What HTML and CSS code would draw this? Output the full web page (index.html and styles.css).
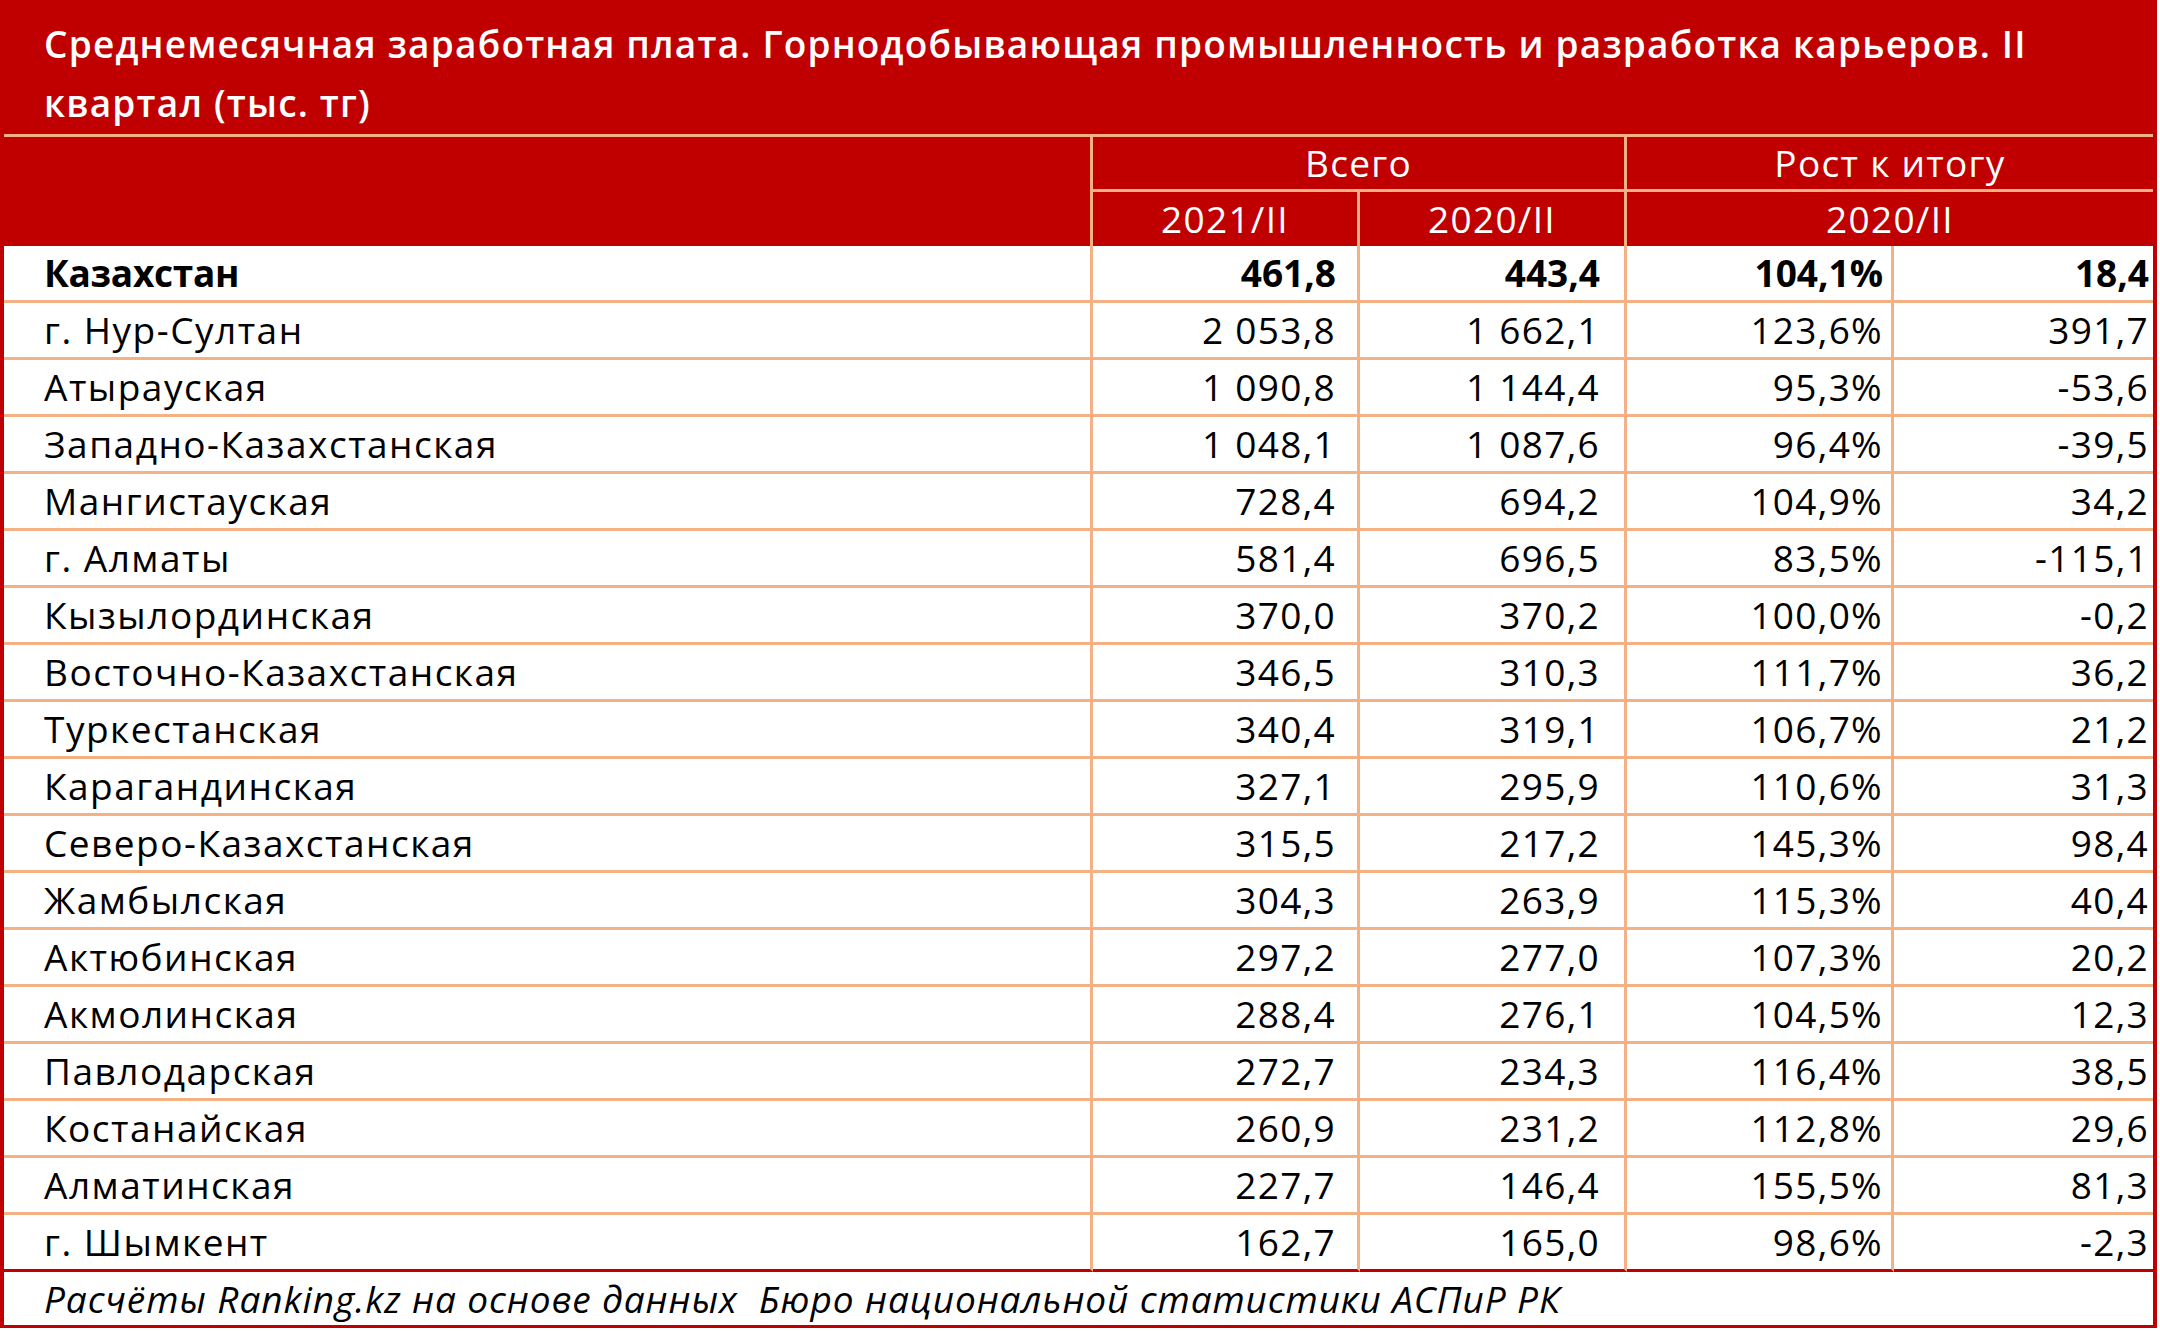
FILE: index.html
```html
<!DOCTYPE html>
<html lang="ru">
<head>
<meta charset="utf-8">
<title>Среднемесячная заработная плата</title>
<link rel="stylesheet" href="styles.css">
</head>
<body>
<div class="sheet">
  <div class="title">Среднемесячная заработная плата. Горнодобывающая промышленность и разработка карьеров. II<br>квартал (тыс. тг)</div>
  <table class="grid">
    <colgroup>
      <col class="c-name">
      <col class="c-num">
      <col class="c-num">
      <col class="c-num">
      <col class="c-last">
    </colgroup>
    <thead>
      <tr class="h1">
        <th rowspan="2" class="blank"></th>
        <th colspan="2">Всего</th>
        <th colspan="2" class="end">Рост к итогу</th>
      </tr>
      <tr class="h2">
        <th>2021/II</th>
        <th>2020/II</th>
        <th colspan="2" class="end">2020/II</th>
      </tr>
    </thead>
    <tbody>
      <tr class="total"><td class="name">Казахстан</td><td class="n2">461,8</td><td class="n3">443,4</td><td class="n4">104,1%</td><td class="n5">18,4</td></tr>
      <tr><td class="name">г. Нур-Султан</td><td class="n2">2 053,8</td><td class="n3">1 662,1</td><td class="n4">123,6%</td><td class="n5">391,7</td></tr>
      <tr><td class="name">Атырауская</td><td class="n2">1 090,8</td><td class="n3">1 144,4</td><td class="n4">95,3%</td><td class="n5">-53,6</td></tr>
      <tr><td class="name">Западно-Казахстанская</td><td class="n2">1 048,1</td><td class="n3">1 087,6</td><td class="n4">96,4%</td><td class="n5">-39,5</td></tr>
      <tr><td class="name">Мангистауская</td><td class="n2">728,4</td><td class="n3">694,2</td><td class="n4">104,9%</td><td class="n5">34,2</td></tr>
      <tr><td class="name">г. Алматы</td><td class="n2">581,4</td><td class="n3">696,5</td><td class="n4">83,5%</td><td class="n5">-115,1</td></tr>
      <tr><td class="name">Кызылординская</td><td class="n2">370,0</td><td class="n3">370,2</td><td class="n4">100,0%</td><td class="n5">-0,2</td></tr>
      <tr><td class="name">Восточно-Казахстанская</td><td class="n2">346,5</td><td class="n3">310,3</td><td class="n4">111,7%</td><td class="n5">36,2</td></tr>
      <tr><td class="name">Туркестанская</td><td class="n2">340,4</td><td class="n3">319,1</td><td class="n4">106,7%</td><td class="n5">21,2</td></tr>
      <tr><td class="name">Карагандинская</td><td class="n2">327,1</td><td class="n3">295,9</td><td class="n4">110,6%</td><td class="n5">31,3</td></tr>
      <tr><td class="name">Северо-Казахстанская</td><td class="n2">315,5</td><td class="n3">217,2</td><td class="n4">145,3%</td><td class="n5">98,4</td></tr>
      <tr><td class="name">Жамбылская</td><td class="n2">304,3</td><td class="n3">263,9</td><td class="n4">115,3%</td><td class="n5">40,4</td></tr>
      <tr><td class="name">Актюбинская</td><td class="n2">297,2</td><td class="n3">277,0</td><td class="n4">107,3%</td><td class="n5">20,2</td></tr>
      <tr><td class="name">Акмолинская</td><td class="n2">288,4</td><td class="n3">276,1</td><td class="n4">104,5%</td><td class="n5">12,3</td></tr>
      <tr><td class="name">Павлодарская</td><td class="n2">272,7</td><td class="n3">234,3</td><td class="n4">116,4%</td><td class="n5">38,5</td></tr>
      <tr><td class="name">Костанайская</td><td class="n2">260,9</td><td class="n3">231,2</td><td class="n4">112,8%</td><td class="n5">29,6</td></tr>
      <tr><td class="name">Алматинская</td><td class="n2">227,7</td><td class="n3">146,4</td><td class="n4">155,5%</td><td class="n5">81,3</td></tr>
      <tr><td class="name">г. Шымкент</td><td class="n2">162,7</td><td class="n3">165,0</td><td class="n4">98,6%</td><td class="n5">-2,3</td></tr>
    </tbody>
    <tfoot>
      <tr><td colspan="5" class="source">Расчёты Ranking.kz на основе данных&nbsp; Бюро национальной статистики АСПиР РК</td></tr>
    </tfoot>
  </table>
</div>
</body>
</html>
```

FILE: styles.css
```css
html, body {
  margin: 0;
  padding: 0;
  background: #ffffff;
}

body {
  font-family: "Open Sans", "Noto Sans", "DejaVu Sans", sans-serif;
  font-size: 37px;
  letter-spacing: 1.3px;
  color: #000000;
}

.sheet {
  width: 2149px;
  border-left: 4px solid #c00000;
  border-right: 4px solid #c00000;
  background: #ffffff;
}

.title {
  background: #c00000;
  color: #ffffff;
  font-weight: 600;
  letter-spacing: 1.2px;
  line-height: 59px;
  padding: 14px 0 0 40px;
  height: 120px;
  border-bottom: 3px solid #f4b183;
  white-space: nowrap;
}

.grid {
  width: 2149px;
  table-layout: fixed;
  border-collapse: separate;
  border-spacing: 0;
}

.c-name { width: 1089px; }
.c-num { width: 267px; }
.c-last { width: 259px; }

.grid th, .grid td {
  padding: 0;
  box-sizing: border-box;
  white-space: nowrap;
  overflow: hidden;
}

.grid thead th {
  background: #c00000;
  color: #ffffff;
  font-weight: 400;
  text-align: center;
  border-right: 3px solid #f4b183;
}

.grid thead th.end {
  border-right: 0;
}

.grid thead .h1 th {
  line-height: 52px;
  border-bottom: 3px solid #f4b183;
}

.grid thead .h1 th.blank {
  border-bottom: 0;
}

.grid thead .h2 th {
  line-height: 54px;
}

.grid tbody td {
  line-height: 54px;
  border-bottom: 3px solid #f4b183;
  border-right: 3px solid #f4b183;
  text-align: right;
}

.grid tbody tr:last-child td {
  border-bottom-color: #c00000;
}

.grid tbody td.name {
  text-align: left;
  padding-left: 40px;
  letter-spacing: 1.5px;
}

.grid tbody td.n2 { padding-right: 21px; }
.grid tbody td.n3 { padding-right: 24px; }
.grid tbody td.n4 { padding-right: 8px; }
.grid tbody td.n5 { padding-right: 4px; border-right: 0; }

.grid tbody tr.total td {
  font-weight: 700;
  letter-spacing: 0;
}

.grid tbody tr.total td.name {
  letter-spacing: -0.3px;
}

.grid tfoot td.source {
  font-style: italic;
  letter-spacing: 0.9px;
  line-height: 53px;
  padding-left: 40px;
  border-bottom: 3px solid #c00000;
  text-align: left;
}
```
